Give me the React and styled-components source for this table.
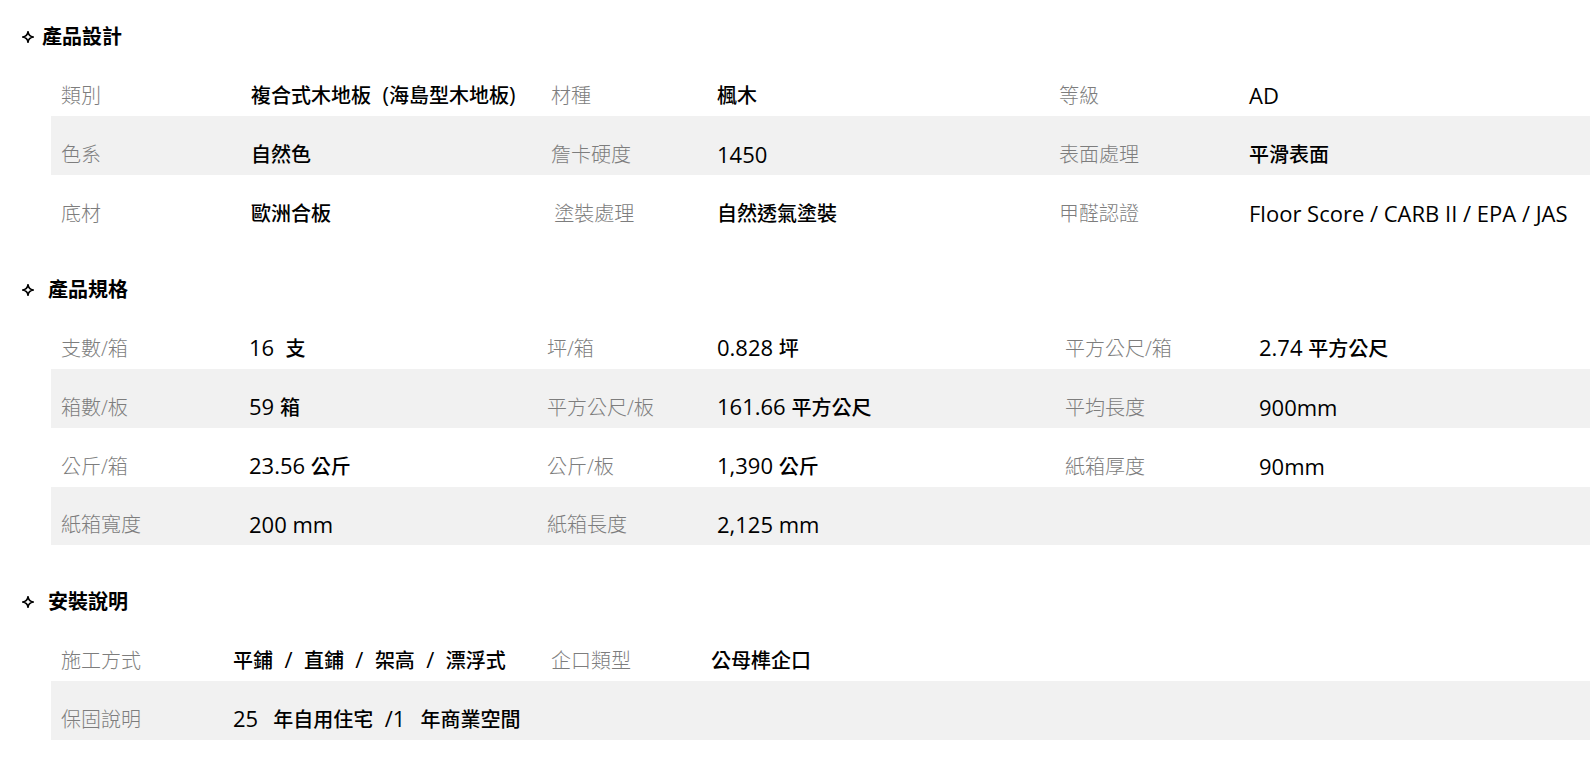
import styled, { createGlobalStyle } from "styled-components";

const GlobalStyle = createGlobalStyle`
  body {
    margin: 0;
    background: #fff;
    font-family: "Open Sans", "Noto Sans CJK TC", sans-serif;
  }
`;

const Page = styled.div`
  padding: 23px 2px 40px 22px;
`;

const Section = styled.section`
  & + & {
    margin-top: 42.5px;
  }
`;

const Heading = styled.h3`
  display: flex;
  align-items: center;
  margin: 0 0 6px;
  height: 28px;
  font-size: 20px;
  font-weight: 700;
  color: #000;
  line-height: 28px;
`;

const Star = styled.svg`
  width: 12px;
  height: 12px;
  margin-right: ${(p) => (p.$wide ? "14px" : "8px")};
  flex-shrink: 0;
`;

const Table = styled.div`
  margin-left: 29px;
`;

const Row = styled.div`
  display: grid;
  grid-template-columns: ${(p) => p.$cols};
  align-items: end;
  height: 58.85px;
  box-sizing: border-box;
  padding-bottom: 7px;
  background: ${(p) => (p.$shade ? "#f1f1f1" : "transparent")};
`;

const Label = styled.div`
  padding-left: 10px;
  font-size: 20px;
  line-height: 27px;
  font-weight: 300;
  color: #7d7d7d;
  white-space: nowrap;
`;

const Value = styled.div`
  padding-left: 10px;
  font-size: 22px;
  line-height: 27px;
  font-weight: 400;
  color: #000;
  white-space: pre;
`;

// CJK runs render a bit smaller than the latin text around them
const Han = styled.span`
  font-size: 20px;
  font-weight: 500;
`;

const HAN_RE = /([\u2E80-\u9FFF\uF900-\uFAFF\uFF00-\uFFEF]+)/;

function renderRuns(text) {
  return text
    .split(HAN_RE)
    .filter(Boolean)
    .map((part, i) => (HAN_RE.test(part) ? <Han key={i}>{part}</Han> : part));
}

function StarIcon({ wide }) {
  return (
    <Star $wide={wide} viewBox="0 0 12 12">
      <path
        d="M6 0.7C6.4 3.9 8.1 5.6 11.3 6C8.1 6.4 6.4 8.1 6 11.3C5.6 8.1 3.9 6.4 0.7 6C3.9 5.6 5.6 3.9 6 0.7Z"
        fill="none"
        stroke="#000"
        strokeWidth="1.6"
        strokeLinejoin="round"
      />
    </Star>
  );
}

const sections = [
  {
    title: "產品設計",
    cols: "190px 300px 166px 342px 190px 1fr",
    rows: [
      [["類別", "複合式木地板\u00a0 (海島型木地板)"], ["材種", "楓木"], ["等級", "AD"]],
      [["色系", "自然色"], ["詹卡硬度", "1450"], ["表面處理", "平滑表面"]],
      [["底材", "歐洲合板"], ["\u2009塗裝處理", "自然透氣塗裝"], ["甲醛認證", "Floor Score / CARB II / EPA / JAS"]],
    ],
  },
  {
    title: "產品規格",
    wide: true,
    cols: "188px 298px 170px 348px 194px 1fr",
    rows: [
      [["支數/箱", "16\u00a0 支"], ["坪/箱", "0.828 坪"], ["平方公尺/箱", "2.74 平方公尺"]],
      [["箱數/板", "59 箱"], ["平方公尺/板", "161.66 平方公尺"], ["平均長度", "900mm"]],
      [["公斤/箱", "23.56 公斤"], ["公斤/板", "1,390 公斤"], ["紙箱厚度", "90mm"]],
      [["紙箱寬度", "200 mm"], ["紙箱長度", "2,125 mm"], ["", ""]],
    ],
  },
  {
    title: "安裝說明",
    wide: true,
    cols: "172px 318px 160px 1fr",
    rows: [
      [["施工方式", "平鋪 \u00a0/ \u00a0直鋪 \u00a0/ \u00a0架高 \u00a0/ \u00a0漂浮式"], ["企口類型", "公母榫企口"]],
      [["保固說明", "25\u00a0\u2009 年自用住宅 \u00a0/1\u00a0\u2009 年商業空間"], ["", ""]],
    ],
  },
];

export default function App() {
  return (
    <Page>
      <GlobalStyle />
      {sections.map((sec) => (
        <Section key={sec.title}>
          <Heading>
            <StarIcon wide={sec.wide} />
            {sec.title}
          </Heading>
          <Table>
            {sec.rows.map((row, i) => (
              <Row key={i} $cols={sec.cols} $shade={i % 2 === 1}>
                {row.map(([label, value], j) => [
                  <Label key={"l" + j}>{label}</Label>,
                  <Value key={"v" + j}>{renderRuns(value)}</Value>,
                ])}
              </Row>
            ))}
          </Table>
        </Section>
      ))}
    </Page>
  );
}
